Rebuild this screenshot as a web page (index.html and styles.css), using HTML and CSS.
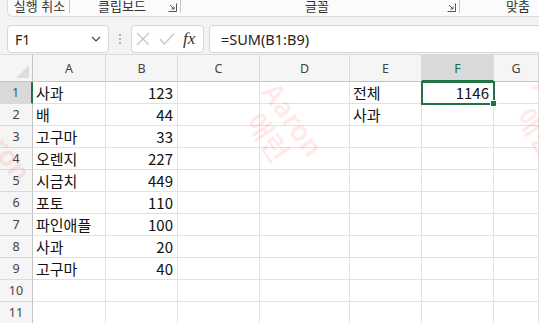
FILE: index.html
```html
<!DOCTYPE html>
<html lang="ko">
<head>
<meta charset="utf-8">
<title>Excel</title>
<link rel="stylesheet" href="styles.css">
</head>
<body>
<div class="app">
  <div class="ribbon">
    <div class="group g-undo"><span class="label">실행 취소</span></div>
    <div class="group g-clip"><span class="label">클립보드</span>
      <svg class="launcher" viewBox="0 0 9 9" width="9" height="9"><path d="M0.5 8.5H8.5V0.5" fill="none" stroke="#555" stroke-width="1"/><path d="M2 2L6 6M6 3.5V6H3.5" fill="none" stroke="#555" stroke-width="1"/></svg>
    </div>
    <div class="group g-font"><span class="label">글꼴</span>
      <svg class="launcher" viewBox="0 0 9 9" width="9" height="9"><path d="M0.5 8.5H8.5V0.5" fill="none" stroke="#555" stroke-width="1"/><path d="M2 2L6 6M6 3.5V6H3.5" fill="none" stroke="#555" stroke-width="1"/></svg>
    </div>
    <div class="group g-align"><span class="label">맞춤</span></div>
  </div>

  <div class="fbar">
    <div class="namebox"><span class="ref">F1</span>
      <svg class="chev" viewBox="0 0 10 6" width="10" height="6"><path d="M1 1L5 5L9 1" fill="none" stroke="#444" stroke-width="1.2"/></svg>
    </div>
    <div class="dots"><i></i><i></i><i></i></div>
    <div class="fbtns">
      <svg class="ico" viewBox="0 0 14 14" width="14" height="14"><path d="M1 1L13 13M13 1L1 13" fill="none" stroke="#c4c4c4" stroke-width="1.2"/></svg>
      <svg class="ico" viewBox="0 0 16 14" width="16" height="14"><path d="M1 7L5.5 12L15 1.5" fill="none" stroke="#c4c4c4" stroke-width="1.2"/></svg>
      <span class="fx">fx</span>
    </div>
    <div class="finput">=SUM(B1:B9)</div>
  </div>

  <div class="sheet">
    <div class="grid">
      <div class="ch corner"><span class="tri"></span></div>
      <div class="ch">A</div><div class="ch">B</div><div class="ch">C</div><div class="ch">D</div><div class="ch">E</div><div class="ch sel">F</div><div class="ch">G</div>

      <div class="rh sel">1</div><div class="c">사과</div><div class="c n">123</div><div class="c"></div><div class="c"></div><div class="c">전체</div><div class="c n active">1146<span class="handle"></span></div><div class="c"></div>
      <div class="rh">2</div><div class="c">배</div><div class="c n">44</div><div class="c"></div><div class="c"></div><div class="c">사과</div><div class="c"></div><div class="c"></div>
      <div class="rh">3</div><div class="c">고구마</div><div class="c n">33</div><div class="c"></div><div class="c"></div><div class="c"></div><div class="c"></div><div class="c"></div>
      <div class="rh">4</div><div class="c">오렌지</div><div class="c n">227</div><div class="c"></div><div class="c"></div><div class="c"></div><div class="c"></div><div class="c"></div>
      <div class="rh">5</div><div class="c">시금치</div><div class="c n">449</div><div class="c"></div><div class="c"></div><div class="c"></div><div class="c"></div><div class="c"></div>
      <div class="rh">6</div><div class="c">포토</div><div class="c n">110</div><div class="c"></div><div class="c"></div><div class="c"></div><div class="c"></div><div class="c"></div>
      <div class="rh">7</div><div class="c">파인애플</div><div class="c n">100</div><div class="c"></div><div class="c"></div><div class="c"></div><div class="c"></div><div class="c"></div>
      <div class="rh">8</div><div class="c">사과</div><div class="c n">20</div><div class="c"></div><div class="c"></div><div class="c"></div><div class="c"></div><div class="c"></div>
      <div class="rh">9</div><div class="c">고구마</div><div class="c n">40</div><div class="c"></div><div class="c"></div><div class="c"></div><div class="c"></div><div class="c"></div>
      <div class="rh">10</div><div class="c"></div><div class="c"></div><div class="c"></div><div class="c"></div><div class="c"></div><div class="c"></div><div class="c"></div>
      <div class="rh">11</div><div class="c"></div><div class="c"></div><div class="c"></div><div class="c"></div><div class="c"></div><div class="c"></div><div class="c"></div>
    </div>
    <div class="wm wm1"><span>Aaron</span><span>애런</span></div>
    <div class="wm wm2"><span>Aaron</span><span>애런</span></div>
    <div class="wm wm3"><span>Aaron</span><span>애런</span></div>
  </div>
</div>
</body>
</html>
```

FILE: styles.css
```css
* { box-sizing: border-box; }
html, body { margin: 0; padding: 0; }
body {
  width: 539px;
  height: 323px;
  overflow: hidden;
  background: #f3f3f3;
  font-family: "Noto Sans CJK KR", "Noto Sans", sans-serif;
  color: #222;
}
.app { display: flex; flex-direction: column; height: 323px; }

/* ribbon */
.ribbon {
  height: 17px;
  margin-left: 7px;
  display: flex;
  background: #fbfbfb;
  border: 1px solid #dadada;
  border-top: none;
  border-right: none;
  border-bottom-left-radius: 6px;
  overflow: hidden;
}
.group {
  display: flex;
  align-items: flex-start;
  height: 13px;
  border-right: 1px solid #c8c8c8;
}
.label {
  flex: 1;
  text-align: center;
  font-size: 13px;
  line-height: 13px;
  margin-top: -1px;
  color: #333;
  white-space: nowrap;
}
.launcher { flex: none; margin: 3px 3px 0 0; }
.g-undo { width: 62px; }
.g-undo .label { padding-left: 2px; }
.g-clip { width: 111px; }
.g-clip .label { padding-left: 6px; }
.g-font { width: 279px; }
.g-font .label { padding-left: 6px; }
.g-align { flex: 1; border-right: none; padding-left: 46px; }
.g-align .label { flex: none; }

/* formula bar */
.fbar {
  margin-top: 8px;
  height: 28px;
  display: flex;
  align-items: stretch;
}
.namebox {
  margin-left: 7px;
  width: 102px;
  background: #fff;
  border: 1px solid #d6d6d6;
  border-radius: 4px;
  display: flex;
  align-items: center;
  padding: 0 7px 0 7px;
}
.ref { flex: 1; font-family: "Noto Sans", sans-serif; font-size: 14px; color: #222; }
.chev { flex: none; }
.dots {
  width: 22px;
  display: flex;
  flex-direction: column;
  align-items: center;
  justify-content: center;
  gap: 2px;
}
.dots i { width: 2px; height: 2px; background: #9a9a9a; border-radius: 1px; display: block; }
.fbtns {
  width: 73px;
  background: #fff;
  border: 1px solid #d6d6d6;
  border-radius: 4px;
  display: flex;
  align-items: center;
  padding-left: 4px;
  gap: 9px;
}
.fx {
  font-family: "Liberation Serif", "DejaVu Serif", serif;
  font-style: italic;
  font-size: 17px;
  color: #333;
  margin-left: -1px;
}
.finput {
  flex: 1;
  margin-left: 5px;
  margin-right: -6px;
  background: #fff;
  border: 1px solid #d6d6d6;
  border-radius: 4px;
  font-family: "Noto Sans", sans-serif;
  font-size: 14.5px;
  line-height: 26px;
  padding-left: 11px;
  color: #222;
}

/* sheet */
.sheet { position: relative; margin-top: 1px; flex: 1; overflow: hidden; background: #fff; }
.grid {
  display: grid;
  grid-template-columns: 33px 73px 72px 82px 90px 72px 72px 1fr;
  grid-template-rows: 28px repeat(11, 22px);
}
.ch {
  background: #f5f5f5;
  border-top: 1px solid #dcdcdc;
  border-right: 1px solid #dadada;
  border-bottom: 1px solid #c4c4c4;
  font-family: "Noto Sans", sans-serif;
  font-size: 12.5px;
  color: #444;
  display: flex;
  align-items: center;
  justify-content: center;
  padding-top: 1px;
}
.ch.corner { position: relative; border-right-color: #c4c4c4; }
.tri {
  position: absolute;
  right: 3px; bottom: 3px;
  width: 0; height: 0;
  border-left: 13px solid transparent;
  border-bottom: 13px solid #dedede;
}
.ch.sel { background: #d9d9d9; color: #1d6b3f; border-bottom: 2px solid #217346; }
.rh {
  background: #f5f5f5;
  border-right: 1px solid #c4c4c4;
  border-bottom: 1px solid #dadada;
  font-family: "Noto Sans", sans-serif;
  font-size: 12.5px;
  color: #444;
  display: flex;
  align-items: center;
  justify-content: center;
}
.rh.sel { background: #d9d9d9; color: #1d6b3f; border-right: 2px solid #217346; }
.c {
  border-right: 1px solid #e1e1e1;
  border-bottom: 1px solid #e1e1e1;
  font-size: 15px;
  line-height: 21px;
  padding: 0 3px;
  white-space: nowrap;
  color: #111;
}
.c.n { text-align: right; padding-right: 4px; }
.c.active {
  position: relative;
  outline: 2px solid #217346;
  outline-offset: -1px;
  z-index: 2;
}
.handle {
  position: absolute;
  right: -4px; bottom: -4px;
  width: 7px; height: 7px;
  background: #217346;
  border: 1px solid #fff;
}

/* watermark */
.wm {
  position: absolute;
  display: flex;
  flex-direction: column;
  align-items: center;
  font-family: "Noto Sans CJK KR", sans-serif;
  font-weight: 700;
  font-size: 28px;
  line-height: 31px;
  color: rgba(255, 30, 30, 0.09);
  transform: rotate(55deg);
  pointer-events: none;
  white-space: nowrap;
  z-index: 3;
}
.wm1 { left: -52px; top: 68px; }
.wm2 { left: 240px; top: 43px; }
.wm3 { left: 510px; top: 38px; }
```
